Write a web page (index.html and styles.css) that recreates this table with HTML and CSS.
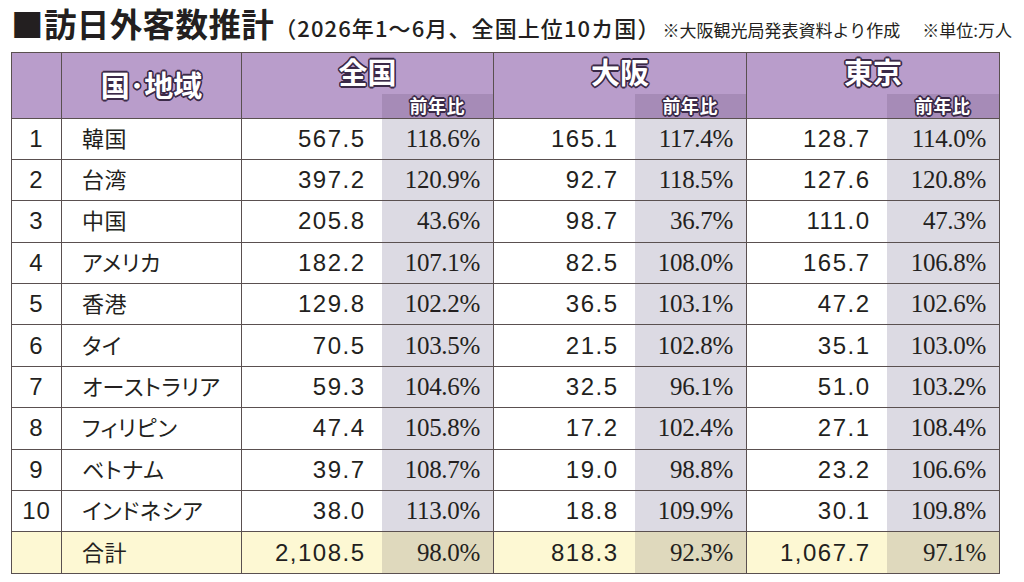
FILE: index.html
```html
<!DOCTYPE html>
<html lang="ja">
<head>
<meta charset="utf-8">
<title>訪日外客数推計</title>
<link rel="stylesheet" href="styles.css">
</head>
<body>
<div class="page">
  <div class="title-row">
    <h1 class="title">■訪日外客数推計</h1>
    <span class="period">（2026年1〜6月、全国上位10カ国）</span>
    <span class="note">※大阪観光局発表資料より作成</span>
    <span class="note unit">※単位:万人</span>
  </div>
  <table class="stats">
    <colgroup>
      <col class="c-rank"><col class="c-name">
      <col class="c-num"><col class="c-pct">
      <col class="c-num2"><col class="c-pct">
      <col class="c-num"><col class="c-pct3">
    </colgroup>
    <thead>
      <tr class="h-top">
        <th rowspan="2" class="h-rank"></th>
        <th rowspan="2" class="h-name"><span class="outline big">国･地域</span></th>
        <th colspan="2" class="h-area"><span class="outline big">全国</span></th>
        <th colspan="2" class="h-area"><span class="outline big">大阪</span></th>
        <th colspan="2" class="h-area"><span class="outline big">東京</span></th>
      </tr>
      <tr class="h-sub">
        <th class="sub-blank"></th><th class="sub-band"><span class="outline small">前年比</span></th>
        <th class="sub-blank"></th><th class="sub-band"><span class="outline small">前年比</span></th>
        <th class="sub-blank"></th><th class="sub-band"><span class="outline small">前年比</span></th>
      </tr>
    </thead>
    <tbody>
      <tr><td class="rank">1</td><td class="name">韓国</td><td class="num">567.5</td><td class="pct">118.6%</td><td class="num">165.1</td><td class="pct">117.4%</td><td class="num">128.7</td><td class="pct">114.0%</td></tr>
      <tr><td class="rank">2</td><td class="name">台湾</td><td class="num">397.2</td><td class="pct">120.9%</td><td class="num">92.7</td><td class="pct">118.5%</td><td class="num">127.6</td><td class="pct">120.8%</td></tr>
      <tr><td class="rank">3</td><td class="name">中国</td><td class="num">205.8</td><td class="pct">43.6%</td><td class="num">98.7</td><td class="pct">36.7%</td><td class="num">111.0</td><td class="pct">47.3%</td></tr>
      <tr><td class="rank">4</td><td class="name">アメリカ</td><td class="num">182.2</td><td class="pct">107.1%</td><td class="num">82.5</td><td class="pct">108.0%</td><td class="num">165.7</td><td class="pct">106.8%</td></tr>
      <tr><td class="rank">5</td><td class="name">香港</td><td class="num">129.8</td><td class="pct">102.2%</td><td class="num">36.5</td><td class="pct">103.1%</td><td class="num">47.2</td><td class="pct">102.6%</td></tr>
      <tr><td class="rank">6</td><td class="name">タイ</td><td class="num">70.5</td><td class="pct">103.5%</td><td class="num">21.5</td><td class="pct">102.8%</td><td class="num">35.1</td><td class="pct">103.0%</td></tr>
      <tr><td class="rank">7</td><td class="name">オーストラリア</td><td class="num">59.3</td><td class="pct">104.6%</td><td class="num">32.5</td><td class="pct">96.1%</td><td class="num">51.0</td><td class="pct">103.2%</td></tr>
      <tr><td class="rank">8</td><td class="name">フィリピン</td><td class="num">47.4</td><td class="pct">105.8%</td><td class="num">17.2</td><td class="pct">102.4%</td><td class="num">27.1</td><td class="pct">108.4%</td></tr>
      <tr><td class="rank">9</td><td class="name">ベトナム</td><td class="num">39.7</td><td class="pct">108.7%</td><td class="num">19.0</td><td class="pct">98.8%</td><td class="num">23.2</td><td class="pct">106.6%</td></tr>
      <tr><td class="rank">10</td><td class="name">インドネシア</td><td class="num">38.0</td><td class="pct">113.0%</td><td class="num">18.8</td><td class="pct">109.9%</td><td class="num">30.1</td><td class="pct">109.8%</td></tr>
      <tr class="total"><td class="rank"></td><td class="name">合計</td><td class="num">2,108.5</td><td class="pct">98.0%</td><td class="num">818.3</td><td class="pct">92.3%</td><td class="num">1,067.7</td><td class="pct">97.1%</td></tr>
    </tbody>
  </table>
</div>
</body>
</html>
```

FILE: styles.css
```css
* { box-sizing: border-box; }
html, body { margin: 0; padding: 0; background: #ffffff; }
body {
  font-family: "Noto Sans CJK JP", "Noto Sans", sans-serif;
  color: #231f20;
}
.page {
  width: 1024px;
  height: 582px;
  padding: 0 0 0 11px;
}
.title-row {
  display: flex;
  align-items: baseline;
  height: 52px;
  padding-top: 1px;
  white-space: nowrap;
}
.title {
  margin: 0;
  font-size: 32.5px;
  font-weight: 700;
  line-height: 44px;
  letter-spacing: 0.4px;
  color: #231f20;
}
.period {
  margin-left: 0;
  font-size: 22px;
  font-weight: 500;
  letter-spacing: 1.1px;
}
.note {
  margin-left: 2px;
  font-size: 17px;
  font-weight: 400;
}
.note.unit { margin-left: 22px; }

.stats {
  border-collapse: collapse;
  table-layout: fixed;
  width: 988px;
  border: 1.5px solid #4a4040;
}
.c-rank { width: 50px; }
.c-name { width: 180px; }
.c-num { width: 140px; }
.c-num2 { width: 141px; }
.c-pct { width: 112px; }
.c-pct3 { width: 113px; }

.stats th, .stats td {
  border: 1px solid #5a5050;
  padding: 0;
}
.stats thead th { background: #b99dcb; }
.h-top { height: 41px; }
.h-sub { height: 24px; }
.h-area { border-bottom: none !important; vertical-align: middle; }
.h-sub th { border-top: none !important; }
.h-sub .sub-blank { border-right: none !important; }
.h-sub .sub-band { border-left: none !important; background: #a68bb7 !important; vertical-align: middle; }

.outline {
  color: #ffffff;
  font-weight: 700;
  font-feature-settings: "palt";
  text-shadow:
    1.6px 0 0 #3b2a48, -1.6px 0 0 #3b2a48, 0 1.6px 0 #3b2a48, 0 -1.6px 0 #3b2a48,
    1.2px 1.2px 0 #3b2a48, -1.2px 1.2px 0 #3b2a48, 1.2px -1.2px 0 #3b2a48, -1.2px -1.2px 0 #3b2a48;
}
.outline.big { font-size: 29px; line-height: 1; display: inline-block; }
.outline.small { font-size: 18px; line-height: 1; display: inline-block; letter-spacing: 0.5px; }
.h-name .outline.big { padding-top: 2px; }

.stats tbody tr { height: 41.4px; }
.stats tbody td { vertical-align: middle; }
.stats td.num { border-right: none; }
.stats td.pct { border-left: none; }

.rank {
  text-align: center;
  font-family: "Liberation Sans", Arial, sans-serif;
  font-size: 24px;
  letter-spacing: 1px;
}
.name {
  padding-left: 20px !important;
  padding-bottom: 4px !important;
  font-family: "Noto Sans CJK JP", sans-serif;
  font-size: 22px;
  font-weight: 400;
  font-feature-settings: "palt";
  letter-spacing: 0.5px;
}
.num {
  text-align: right;
  padding-right: 16px !important;
  font-family: "Liberation Sans", Arial, sans-serif;
  font-size: 24px;
  letter-spacing: 1.5px;
}
.pct {
  text-align: right;
  padding-right: 13px !important;
  font-family: "Liberation Serif", "Times New Roman", serif;
  font-size: 25px;
  letter-spacing: -0.3px;
  background: #dcdae3;
}
.total td { background: #fdf8d3; }
.total td.pct { background: #dfd9bd; }
```
